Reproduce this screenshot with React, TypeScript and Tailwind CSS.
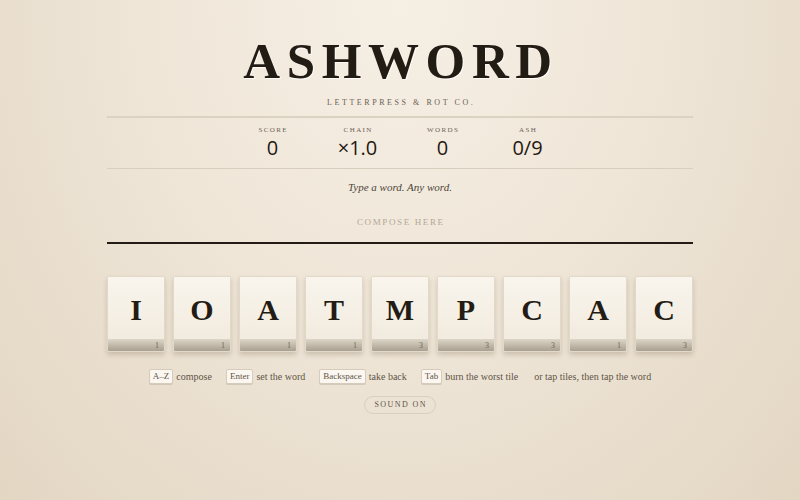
const tiles: { letter: string; value: number }[] = [
  { letter: 'I', value: 1 },
  { letter: 'O', value: 1 },
  { letter: 'A', value: 1 },
  { letter: 'T', value: 1 },
  { letter: 'M', value: 3 },
  { letter: 'P', value: 3 },
  { letter: 'C', value: 3 },
  { letter: 'A', value: 1 },
  { letter: 'C', value: 3 },
];

const stats = [
  { label: 'SCORE', value: '0' },
  { label: 'CHAIN', value: '×1.0' },
  { label: 'WORDS', value: '0' },
  { label: 'ASH', value: '0/9' },
];

const hints = [
  { key: 'A–Z', text: 'compose' },
  { key: 'Enter', text: 'set the word' },
  { key: 'Backspace', text: 'take back' },
  { key: 'Tab', text: 'burn the worst tile' },
];

function Tile({ letter, value }: { letter: string; value: number }) {
  return (
    <div className="relative flex h-[76px] w-[58px] flex-col overflow-hidden rounded-[2px] border border-[#e2d9ca] bg-[#f6f0e5] shadow-[0_3px_5px_rgba(90,70,40,0.22)]">
      <div className="flex flex-1 items-center justify-center bg-gradient-to-b from-[#f9f5ed] to-[#f2ebdf] pt-[4px] font-['Liberation_Serif',serif] text-[30px] font-bold leading-none text-[#231c14]">
        {letter}
      </div>
      <div className="relative h-[12px] bg-gradient-to-b from-[#ddd5c7] to-[#a9a090]">
        <span className="absolute right-[5px] bottom-[1px] font-['Liberation_Serif',serif] text-[8px] leading-none text-[#6f6656]">
          {value}
        </span>
      </div>
    </div>
  );
}

export default function App() {
  return (
    <div className="min-h-[500px] w-full bg-[radial-gradient(ellipse_at_50%_0%,#f6efe4_0%,#efe6d8_45%,#e3d6c3_100%)] font-['Liberation_Serif',serif]">
      <div className="mx-auto flex w-[586px] flex-col items-center pt-[36px]">
        <h1 className="pl-[0.04em] text-[51px] font-bold leading-none tracking-[0.13em] text-[#231c14] [text-shadow:1px_1px_0_rgba(255,255,255,0.8)]">
          ASHWORD
        </h1>
        <div className="mt-[12px] pl-[0.3em] text-[8px] leading-none tracking-[0.32em] text-[#6b6154]">
          LETTERPRESS &amp; ROT CO.
        </div>
        <div className="mt-[9px] h-[2px] w-full bg-[#dcd2c2]" />
        <div className="flex h-[51px] w-full items-center justify-center gap-[33px] border-b border-[#d8cebd] pb-[2px]">
          {stats.map((s) => (
            <div key={s.label} className="flex w-[52px] flex-col items-center">
              <div className="pl-[0.2em] text-[7px] leading-none tracking-[0.2em] text-[#6b6154]">{s.label}</div>
              <div className="mt-[4px] font-['Open_Sans',sans-serif] text-[20px] font-medium leading-none text-[#1f1912]">
                {s.value}
              </div>
            </div>
          ))}
        </div>
        <div className="mt-[13px] text-[11px] italic leading-none text-[#4e453a]">Type a word. Any word.</div>
        <div className="mt-[25px] pl-[0.18em] text-[9px] leading-none tracking-[0.18em] text-[#b3a897]">COMPOSE HERE</div>
        <div className="mt-[15px] h-[2px] w-full bg-[#221c15]" />
        <div className="mt-[32px] flex w-full justify-between">
          {tiles.map((t, i) => (
            <Tile key={i} letter={t.letter} value={t.value} />
          ))}
        </div>
        <div className="mt-[17px] flex items-center text-[10px] leading-none text-[#5e5547]">
          {hints.map((h) => (
            <div key={h.key} className="mr-[14px] flex items-center gap-[3px]">
              <span className="rounded-[2px] border border-[#d6ccbb] bg-[#fbf7f0] px-[3px] py-[2px] text-[9px] text-[#5e5547] shadow-[0_1px_0_rgba(120,100,70,0.2)]">
                {h.key}
              </span>
              <span>{h.text}</span>
            </div>
          ))}
          <span className="ml-[2px]">or tap tiles, then tap the word</span>
        </div>
        <button className="mt-[12px] h-[18px] rounded-full border border-[#d9cfbe] px-[8px] pl-[calc(8px+0.18em)] text-[8px] leading-none tracking-[0.18em] text-[#5e5547]">
          SOUND ON
        </button>
      </div>
    </div>
  );
}
